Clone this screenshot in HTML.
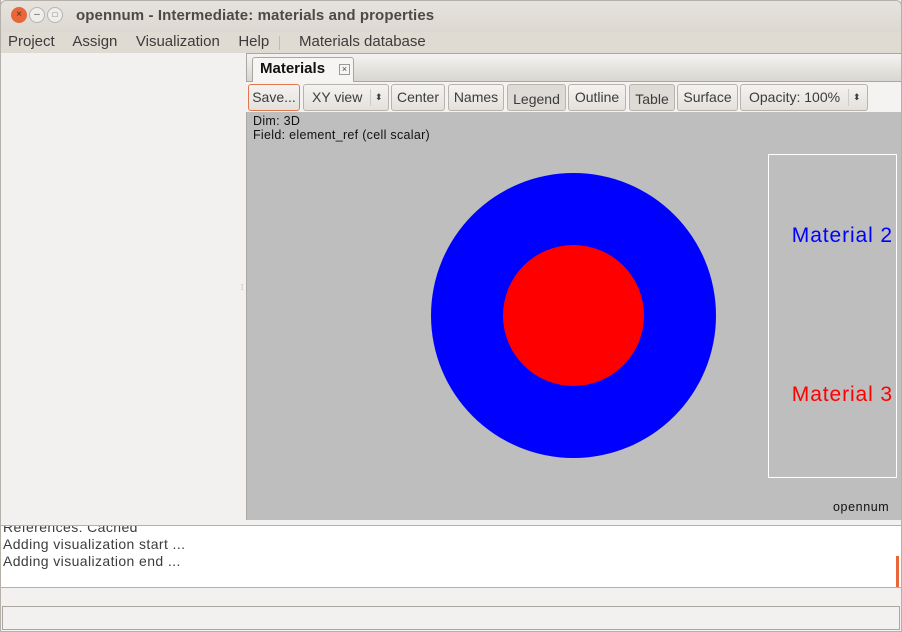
<!DOCTYPE html>
<html><head><style>
*{margin:0;padding:0;box-sizing:border-box}
body{width:902px;height:632px;overflow:hidden;font-family:"Liberation Sans",sans-serif;background:#f2f1f0;position:relative;font-size:14px;color:#3c3c3c}
.a{position:absolute}
.btn{position:absolute;top:84px;height:27px;border:1px solid #b8b4ad;border-radius:3px;background:linear-gradient(#f4f3f1,#e4e1dc);font-size:14px;line-height:25px;text-align:center;color:#3c3c3c}
</style></head><body>
<div class="a" style="left:0;top:0;width:902px;height:32px;background:linear-gradient(#e6e3de,#dcd8d1);border-radius:6px 6px 0 0;border:1px solid #b5b1aa;border-bottom:none"></div>
<div class="a" style="left:11px;top:7px;width:16px;height:16px;border-radius:50%;background:#e9663a;color:#5a2a1a;font-size:10px;line-height:16px;text-align:center">×</div>
<div class="a" style="left:29px;top:7px;width:16px;height:16px;border-radius:50%;background:#f0eeea;border:1px solid #b8b4ae;font-size:10px;line-height:13px;text-align:center;color:#555">–</div>
<div class="a" style="left:47px;top:7px;width:16px;height:16px;border-radius:50%;background:#f0eeea;border:1px solid #b8b4ae;font-size:8px;line-height:13px;text-align:center;color:#555">□</div>
<div class="a" style="left:76px;top:7px;font-weight:bold;font-size:15px;color:#4d4a45;letter-spacing:0.1px">opennum - Intermediate: materials and properties</div>
<div class="a" style="left:0;top:32px;width:902px;height:21px;background:#dfdbd2"></div>
<div class="a" style="left:8px;top:33px;font-size:15px;color:#3c3c3c;word-spacing:2px">Project&nbsp;&nbsp; Assign&nbsp;&nbsp; Visualization&nbsp;&nbsp; Help</div>
<div class="a" style="left:279px;top:36px;width:1px;height:14px;background:#c0bcb5"></div>
<div class="a" style="left:299px;top:33px;font-size:15px">Materials database</div>
<div class="a" style="left:241px;top:283px;font-size:8px;color:#999">⁞</div>
<div class="a" style="left:246px;top:53px;width:656px;height:29px;background:linear-gradient(#f4f3f1,#d9d6d1);border:1px solid #aaa6a0"></div>
<div class="a" style="left:252px;top:57px;width:102px;height:25px;background:#f6f5f4;border:1px solid #aaa6a0;border-bottom:none;border-radius:3px 3px 0 0"></div>
<div class="a" style="left:260px;top:60px;font-weight:bold;font-size:15px;color:#111">Materials</div>
<div class="a" style="left:339px;top:64px;width:11px;height:11px;border:1px solid #999;font-size:9px;line-height:9px;text-align:center;color:#444">×</div>
<div class="a" style="left:246px;top:82px;width:656px;height:30px;background:#f4f3f1"></div>
<div class="btn" style="left:248px;width:52px;border-color:#e2774f">Save...</div>
<div class="btn" style="left:303px;width:86px;text-align:left;padding-left:8px">XY view<span style="position:absolute;left:66px;top:4px;height:17px;border-left:1px solid #ccc"></span><span style="position:absolute;left:71px;top:0;font-size:9px">⬍</span></div>
<div class="btn" style="left:391px;width:54px">Center</div>
<div class="btn" style="left:448px;width:56px">Names</div>
<div class="btn" style="left:507px;width:59px;background:#dedad5;line-height:29px">Legend</div>
<div class="btn" style="left:568px;width:58px">Outline</div>
<div class="btn" style="left:629px;width:46px;background:#dedad5;line-height:29px">Table</div>
<div class="btn" style="left:677px;width:61px">Surface</div>
<div class="btn" style="left:740px;width:128px;text-align:left;padding-left:8px">Opacity: 100%<span style="position:absolute;left:107px;top:4px;height:17px;border-left:1px solid #ccc"></span><span style="position:absolute;left:112px;top:0;font-size:9px">⬍</span></div>
<div class="a" style="left:246px;top:112px;width:656px;height:408px;background:#bebebe;border-left:1px solid #aaa6a0"></div>
<div class="a" style="left:253px;top:114px;font-size:12.5px;color:#111;line-height:14px;letter-spacing:0.3px">Dim: 3D<br>Field: element_ref (cell scalar)</div>
<div class="a" style="left:431px;top:173px;width:285px;height:285px;border-radius:50%;background:#0000ff"></div>
<div class="a" style="left:503px;top:245px;width:141px;height:141px;border-radius:50%;background:#ff0000"></div>
<div class="a" style="left:768px;top:154px;width:129px;height:324px;border:1px solid #fff"></div>
<div class="a" style="left:770px;top:224px;width:123px;text-align:right;font-size:21px;color:#0000ff;letter-spacing:0.9px;white-space:nowrap">Material 2</div>
<div class="a" style="left:770px;top:383px;width:123px;text-align:right;font-size:21px;color:#ff0000;letter-spacing:0.9px;white-space:nowrap">Material 3</div>
<div class="a" style="left:833px;top:500px;font-size:12.5px;color:#111;letter-spacing:0.6px">opennum</div>
<div class="a" style="left:0;top:525px;width:902px;height:63px;background:#fff;border:1px solid #b5b1aa;overflow:hidden"></div>
<div class="a" style="left:3px;top:519px;font-size:14px;line-height:17px;color:#3c3c3c;clip-path:inset(7px 0 0 0);letter-spacing:0.4px">References: Cached<br>Adding visualization start ...<br>Adding visualization end ...</div>
<div class="a" style="left:896px;top:556px;width:3px;height:31px;background:#e9663a"></div>
<div class="a" style="left:2px;top:606px;width:898px;height:24px;border:1px solid #aaa6a0;background:#f2f1f0"></div>
<div class="a" style="left:0;top:0;width:902px;height:632px;border:1px solid #b5b1aa;border-top:none;pointer-events:none"></div>
</body></html>
